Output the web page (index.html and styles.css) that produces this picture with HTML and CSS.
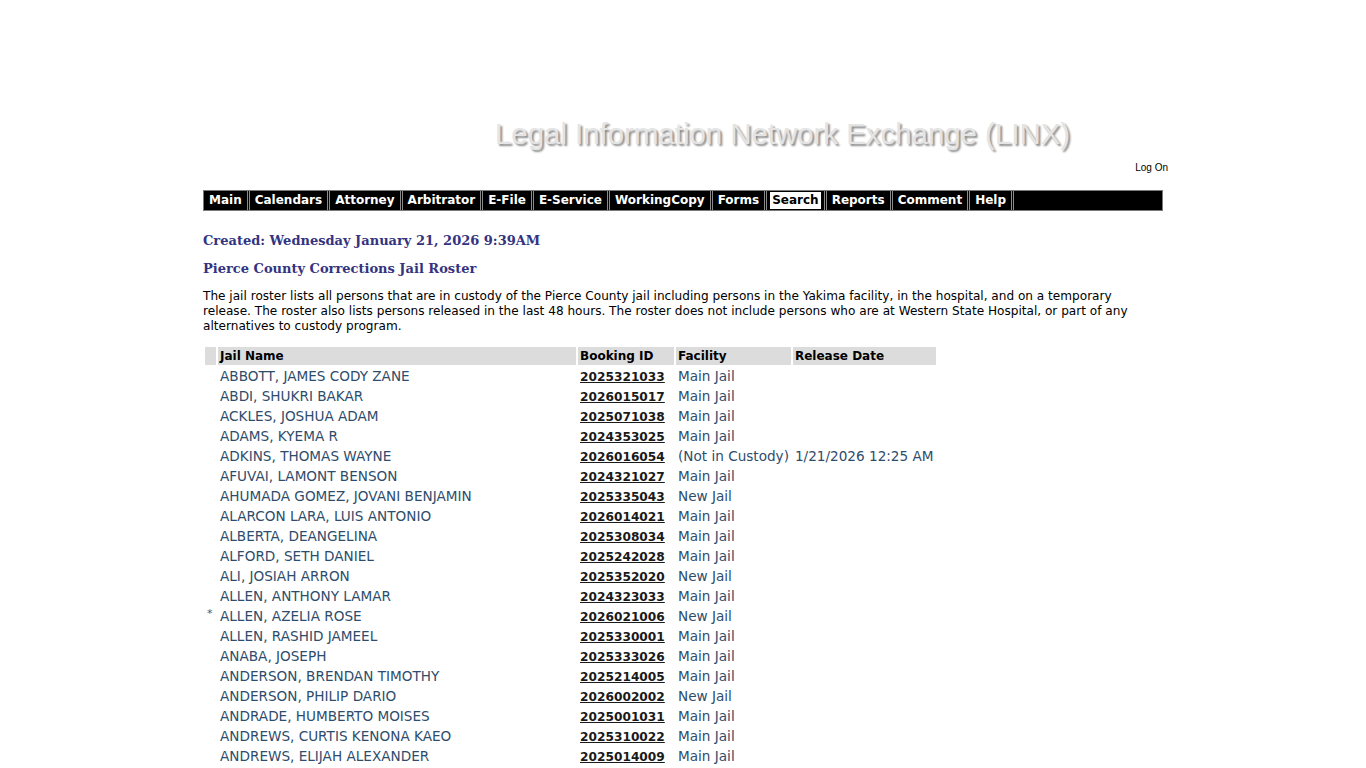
FILE: index.html
```html
<!DOCTYPE html>
<html>
<head>
<meta charset="utf-8">
<title>LINX Jail Roster</title>
<link rel="stylesheet" href="styles.css">
</head>
<body>
<div class="page">
  <header class="masthead">
    <h1 class="site-title">Legal Information Network Exchange (LINX)</h1>
    <div class="logon"><a href="#">Log On</a></div>
  </header>
  <nav class="nav">
    <a href="#"><span>Main</span></a>
    <a href="#"><span>Calendars</span></a>
    <a href="#"><span>Attorney</span></a>
    <a href="#"><span>Arbitrator</span></a>
    <a href="#"><span>E-File</span></a>
    <a href="#"><span>E-Service</span></a>
    <a href="#"><span>WorkingCopy</span></a>
    <a href="#"><span>Forms</span></a>
    <a href="#" class="active"><span>Search</span></a>
    <a href="#"><span>Reports</span></a>
    <a href="#"><span>Comment</span></a>
    <a href="#"><span>Help</span></a>
  </nav>
  <main class="content">
    <h2 class="heading">Created: Wednesday January 21, 2026 9:39AM</h2>
    <h2 class="heading">Pierce County Corrections Jail Roster</h2>
    <p class="intro">The jail roster lists all persons that are in custody of the Pierce County jail including persons in the Yakima facility, in the hospital, and on a temporary release. The roster also lists persons released in the last 48 hours. The roster does not include persons who are at Western State Hospital, or part of any alternatives to custody program.</p>
    <table class="roster">
      <thead>
        <tr><th class="c-star"></th><th class="c-name">Jail Name</th><th class="c-id">Booking ID</th><th class="c-fac">Facility</th><th class="c-rel">Release Date</th></tr>
      </thead>
      <tbody>
        <tr><td class="c-star"></td><td>ABBOTT, JAMES CODY ZANE</td><td><a href="#">2025321033</a></td><td>Main Jail</td><td></td></tr>
        <tr><td class="c-star"></td><td>ABDI, SHUKRI BAKAR</td><td><a href="#">2026015017</a></td><td>Main Jail</td><td></td></tr>
        <tr><td class="c-star"></td><td>ACKLES, JOSHUA ADAM</td><td><a href="#">2025071038</a></td><td>Main Jail</td><td></td></tr>
        <tr><td class="c-star"></td><td>ADAMS, KYEMA R</td><td><a href="#">2024353025</a></td><td>Main Jail</td><td></td></tr>
        <tr><td class="c-star"></td><td>ADKINS, THOMAS WAYNE</td><td><a href="#">2026016054</a></td><td>(Not in Custody)</td><td>1/21/2026 12:25 AM</td></tr>
        <tr><td class="c-star"></td><td>AFUVAI, LAMONT BENSON</td><td><a href="#">2024321027</a></td><td>Main Jail</td><td></td></tr>
        <tr><td class="c-star"></td><td>AHUMADA GOMEZ, JOVANI BENJAMIN</td><td><a href="#">2025335043</a></td><td>New Jail</td><td></td></tr>
        <tr><td class="c-star"></td><td>ALARCON LARA, LUIS ANTONIO</td><td><a href="#">2026014021</a></td><td>Main Jail</td><td></td></tr>
        <tr><td class="c-star"></td><td>ALBERTA, DEANGELINA</td><td><a href="#">2025308034</a></td><td>Main Jail</td><td></td></tr>
        <tr><td class="c-star"></td><td>ALFORD, SETH DANIEL</td><td><a href="#">2025242028</a></td><td>Main Jail</td><td></td></tr>
        <tr><td class="c-star"></td><td>ALI, JOSIAH ARRON</td><td><a href="#">2025352020</a></td><td>New Jail</td><td></td></tr>
        <tr><td class="c-star"></td><td>ALLEN, ANTHONY LAMAR</td><td><a href="#">2024323033</a></td><td>Main Jail</td><td></td></tr>
        <tr><td class="c-star">*</td><td>ALLEN, AZELIA ROSE</td><td><a href="#">2026021006</a></td><td>New Jail</td><td></td></tr>
        <tr><td class="c-star"></td><td>ALLEN, RASHID JAMEEL</td><td><a href="#">2025330001</a></td><td>Main Jail</td><td></td></tr>
        <tr><td class="c-star"></td><td>ANABA, JOSEPH</td><td><a href="#">2025333026</a></td><td>Main Jail</td><td></td></tr>
        <tr><td class="c-star"></td><td>ANDERSON, BRENDAN TIMOTHY</td><td><a href="#">2025214005</a></td><td>Main Jail</td><td></td></tr>
        <tr><td class="c-star"></td><td>ANDERSON, PHILIP DARIO</td><td><a href="#">2026002002</a></td><td>New Jail</td><td></td></tr>
        <tr><td class="c-star"></td><td>ANDRADE, HUMBERTO MOISES</td><td><a href="#">2025001031</a></td><td>Main Jail</td><td></td></tr>
        <tr><td class="c-star"></td><td>ANDREWS, CURTIS KENONA KAEO</td><td><a href="#">2025310022</a></td><td>Main Jail</td><td></td></tr>
        <tr><td class="c-star"></td><td>ANDREWS, ELIJAH ALEXANDER</td><td><a href="#">2025014009</a></td><td>Main Jail</td><td></td></tr>
      </tbody>
    </table>
  </main>
</div>
</body>
</html>
```
FILE: styles.css
```css
html, body {
  margin: 0;
  padding: 0;
  background: #ffffff;
}
body {
  font-family: "DejaVu Sans", Verdana, sans-serif;
  color: #000;
}
.page {
  width: 965px;
  margin-left: 203px;
}
.masthead {
  display: flex;
  flex-direction: column;
}
.site-title {
  margin: 0;
  padding: 116px 0 0 292px;
  height: 36px;
  font-family: "Liberation Sans", Arial, sans-serif;
  font-weight: normal;
  font-size: 29.4px;
  line-height: 36px;
  color: #e4e4e4;
  text-shadow: 2px 2px 2px #8a8a8a;
  white-space: nowrap;
}
.logon {
  margin-top: 10px;
  text-align: right;
  font-family: "Liberation Sans", Arial, sans-serif;
  font-size: 10px;
  line-height: 12px;
}
.logon a {
  color: #000;
  text-decoration: none;
}
.nav {
  margin-top: 16px;
  width: 958px;
  height: 19px;
  background: #000;
  border: 1px solid #7a7a7a;
  display: flex;
  align-items: stretch;
}
.nav a {
  display: flex;
  align-items: center;
  padding: 0 3px 0 3px;
  border-right: 3px double #8a8a8a;
  color: #fff;
  text-decoration: none;
  font-weight: bold;
  font-size: 12px;
  line-height: 17px;
}
.nav a span {
  padding: 0 2px;
}
.nav a.active span {
  background: #fff;
  color: #000;
}
.content {
  padding-top: 21px;
}
.heading {
  margin: 0 0 11px 0;
  font-family: Georgia, "DejaVu Serif", serif;
  font-weight: bold;
  font-size: 13px;
  line-height: 17px;
  color: #333380;
}
.intro {
  margin: 12px 0 12px 0;
  font-size: 12.1px;
  line-height: 15px;
  width: 940px;
}
.roster {
  border-collapse: separate;
  border-spacing: 2px;
  font-size: 13.6px;
  margin-top: -1px;
}
.roster th {
  background: #dcdcdc;
  text-align: left;
  font-weight: bold;
  font-size: 12px;
  height: 18px;
  padding: 0 2px;
  line-height: 16px;
  color: #000;
}
.roster td {
  height: 18px;
  padding: 0 2px;
  line-height: 18px;
  color: #2e4c6b;
  white-space: nowrap;
  vertical-align: middle;
}
.roster td a {
  color: #1a1a1a;
  font-weight: bold;
  font-size: 12.2px;
  line-height: 16px;
  text-decoration: underline;
}
.roster .c-star {
  width: 7px;
}
.roster td.c-star {
  color: #555;
  font-size: 11px;
  line-height: 12px;
  vertical-align: top;
  padding-top: 1px;
  height: 17px;
}
.roster .c-name { width: 354px; }
.roster .c-id { width: 92px; }
.roster .c-fac { width: 109px; }
.roster .c-rel { width: 138px; }
```
